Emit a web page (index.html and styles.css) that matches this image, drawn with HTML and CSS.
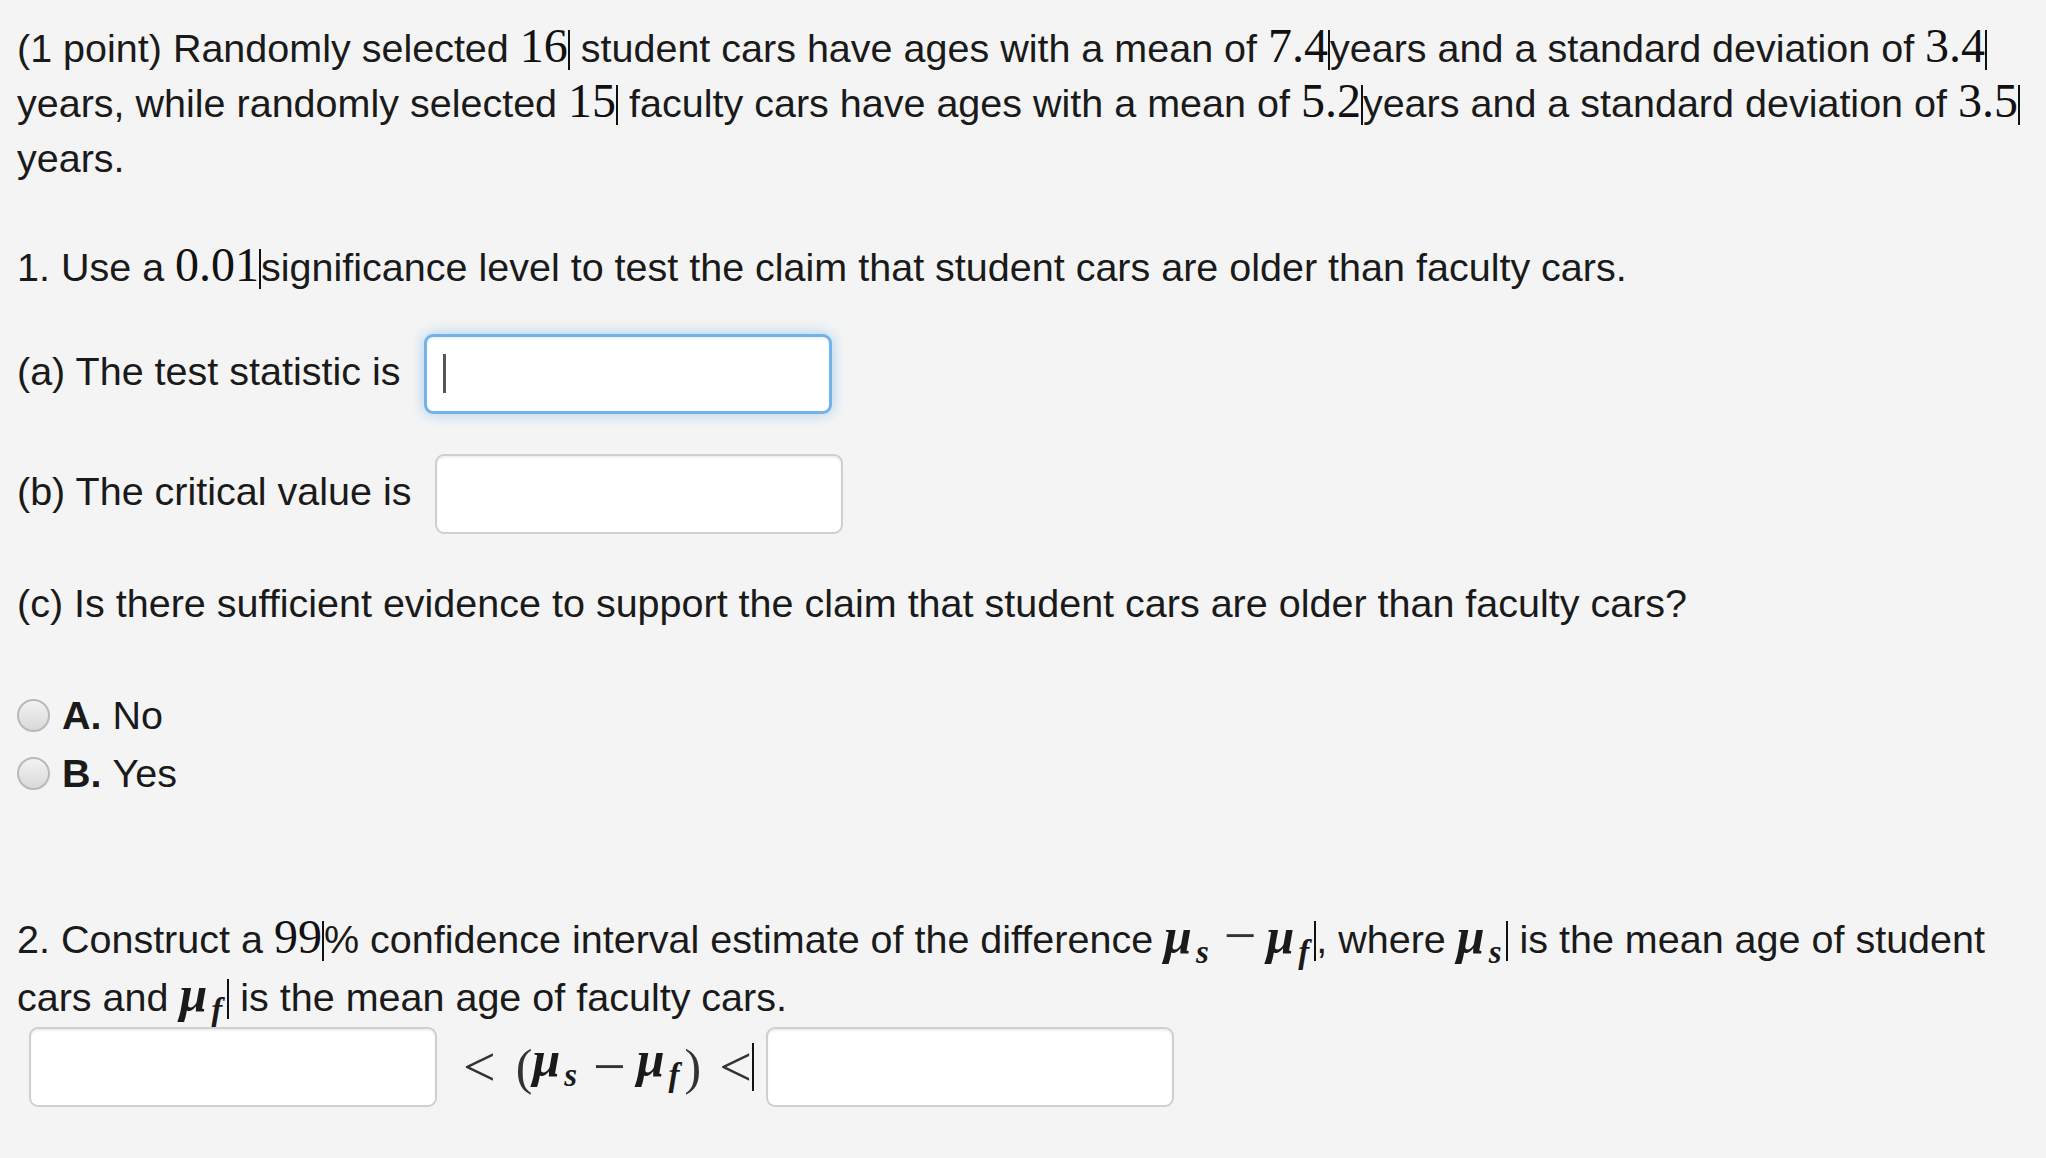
FILE: index.html
```html
<!DOCTYPE html>
<html>
<head>
<meta charset="utf-8">
<link rel="stylesheet" href="styles.css">
</head>
<body>
<div class="problem">
  <p class="intro">(1 point) Randomly selected <span class="m">16</span><span class="bar"></span> student cars have ages with a mean of <span class="m">7.4</span><span class="bar"></span>years and a standard deviation of <span class="m">3.4</span><span class="bar"></span> years, while randomly selected <span class="m">15</span><span class="bar"></span> faculty cars have ages with a mean of <span class="m">5.2</span><span class="bar"></span>years and a standard deviation of <span class="m">3.5</span><span class="bar"></span> years.</p>

  <p class="q1">1. Use a <span class="m">0.01</span><span class="bar"></span>significance level to test the claim that student cars are older than faculty cars.</p>

  <div class="row row-a"><span class="label">(a) The test statistic is </span><span class="field focused"><span class="caret"></span></span></div>
  <div class="row row-b"><span class="label">(b) The critical value is </span><span class="field"></span></div>

  <p class="qc">(c) Is there sufficient evidence to support the claim that student cars are older than faculty cars?</p>

  <div class="choices">
    <div class="choice"><span class="radio"></span><b>A.</b>&nbsp;No</div>
    <div class="choice"><span class="radio"></span><b>B.</b>&nbsp;Yes</div>
  </div>

  <p class="q2">2. Construct a <span class="m">99</span><span class="bar"></span>% confidence interval estimate of the difference <span class="mi">μ<sub>s</sub></span><span class="mo bin">−</span><span class="mi">μ<sub>f</sub></span><span class="bar"></span>, where <span class="mi">μ<sub>s</sub></span><span class="bar"></span> is the mean age of student cars and <span class="mi">μ<sub>f</sub></span><span class="bar"></span> is the mean age of faculty cars.</p>

  <div class="interval">
    <span class="field"></span>
    <span class="expr"><span class="mo rel">&lt;</span><span class="mo paren">(</span><span class="mi">μ<sub>s</sub></span><span class="mo bin">−</span><span class="mi">μ<sub>f</sub></span><span class="mo paren">)</span><span class="mo rel last">&lt;</span><span class="bar tall"></span></span>
    <span class="field"></span>
  </div>
</div>
</body>
</html>
```

FILE: styles.css
```css
html, body {
  margin: 0;
  padding: 0;
  background: #f4f4f4;
}

body {
  width: 2046px;
  height: 1158px;
  overflow: hidden;
  font-family: "Liberation Sans", Arial, sans-serif;
  font-size: 39.5px;
  line-height: 55px;
  color: #1a1a1a;
}

.problem {
  padding: 21px 17px 0 17px;
}

p {
  margin: 0;
}

.m {
  font-family: "Liberation Serif", "Times New Roman", serif;
  font-size: 48px;
  line-height: 0;
  color: #111;
}

.mi {
  font-family: "Liberation Serif", "Times New Roman", serif;
  font-style: italic;
  font-weight: bold;
  font-size: 50px;
  line-height: 0;
  color: #1a1a1a;
}

.mi sub {
  font-size: 33px;
  line-height: 0;
  vertical-align: -10px;
  margin-left: 4px;
  margin-right: 5px;
}

.mo {
  font-family: "Liberation Serif", "Times New Roman", serif;
  font-size: 46px;
  line-height: 0;
  color: #333;
}

.mo.bin {
  font-size: 58px;
  margin: 0 10px;
  vertical-align: -2px;
}

.expr .mo.bin {
  margin: 0 11px;
}

.mo.rel {
  font-size: 58px;
  margin: 0 20px 0 0;
  vertical-align: -3px;
}

.mo.rel.last {
  margin: 0 0 0 18px;
}

.mo.paren {
  font-size: 50px;
}

.bar {
  display: inline-block;
  width: 2px;
  height: 40px;
  background: #111;
  vertical-align: -8px;
}

.bar.tall {
  height: 48px;
  vertical-align: -12px;
}

.q1 {
  margin-top: 54px;
}

.row {
  height: 80px;
  display: flex;
  align-items: center;
  white-space: pre;
}

.label {
  margin-top: -5px;
}

.row-a {
  margin-top: 39px;
}

.row-b {
  margin-top: 40px;
}

.field {
  display: inline-block;
  box-sizing: border-box;
  width: 408px;
  height: 80px;
  background: #fff;
  border: 2px solid #cfcfcf;
  border-radius: 9px;
  box-shadow: inset 0 2px 2px rgba(0, 0, 0, 0.06);
  position: relative;
  flex: none;
}

.row .field {
  margin-left: 13px;
}

.field.focused {
  border: 3px solid #72b3ea;
  box-shadow: inset 0 2px 2px rgba(0, 0, 0, 0.06), 0 0 14px rgba(102, 175, 233, 0.55);
}

.caret {
  position: absolute;
  left: 16px;
  top: 17px;
  width: 3px;
  height: 39px;
  background: #555;
}

.qc {
  margin-top: 42px;
}

.choices {
  margin-top: 55px;
  display: flex;
  flex-direction: column;
}

.choice {
  display: flex;
  align-items: center;
  height: 58px;
}

.choice b {
  font-weight: bold;
}

.radio {
  box-sizing: border-box;
  width: 33px;
  height: 33px;
  border-radius: 50%;
  border: 2px solid #b9b9b9;
  background: linear-gradient(#f2f2f2, #d9d9d9);
  margin-right: 12px;
}

.q2 {
  margin-top: 108px;
  line-height: 58px;
}

.interval {
  margin-top: 1px;
  display: flex;
  align-items: center;
  padding-left: 12px;
}

.expr {
  margin: 0 12px 0 26px;
  white-space: nowrap;
  height: 80px;
  display: flex;
  align-items: center;
}
```
